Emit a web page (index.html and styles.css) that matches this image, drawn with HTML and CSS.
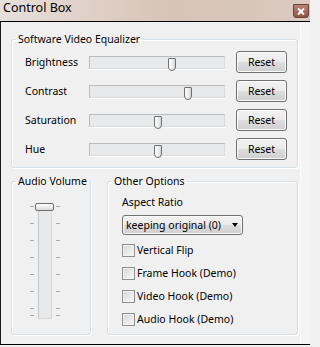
FILE: index.html
```html
<!DOCTYPE html>
<html>
<head>
<meta charset="utf-8">
<link rel="stylesheet" href="styles.css">
</head>
<body>
<div class="titlebar">
  <span class="title">Control Box</span>
  <span class="close"><svg width="8" height="7" viewBox="0 0 8 7"><path d="M1 0.5 L7 6.5 M7 0.5 L1 6.5" stroke="#fff" stroke-width="2"/></svg></span>
</div>
<div class="frame">
  <div class="client">
    <fieldset class="group eq">
      <legend>Software Video Equalizer</legend>
      <div class="eq-body">
        <div class="eq-row"><span class="eq-label">Brightness</span><div class="track"><span class="thumb" style="left:78px"></span></div><button class="btn">Reset</button></div>
        <div class="eq-row"><span class="eq-label">Contrast</span><div class="track"><span class="thumb" style="left:94px"></span></div><button class="btn">Reset</button></div>
        <div class="eq-row"><span class="eq-label">Saturation</span><div class="track"><span class="thumb" style="left:64px"></span></div><button class="btn">Reset</button></div>
        <div class="eq-row"><span class="eq-label">Hue</span><div class="track"><span class="thumb" style="left:64px"></span></div><button class="btn">Reset</button></div>
      </div>
    </fieldset>
    <div class="bottom">
      <fieldset class="group vol">
        <legend>Audio Volume</legend>
        <div class="vol-body">
          <div class="vslider">
            <div class="ticks"><i class="tick"></i><i class="tick"></i><i class="tick"></i><i class="tick"></i><i class="tick"></i><i class="tick"></i><i class="tick"></i><i class="tick end"></i></div>
            <div class="vtrack"><span class="vthumb"></span></div>
            <div class="ticks"><i class="tick"></i><i class="tick"></i><i class="tick"></i><i class="tick"></i><i class="tick"></i><i class="tick"></i><i class="tick"></i><i class="tick end"></i></div>
          </div>
        </div>
      </fieldset>
      <fieldset class="group opts">
        <legend>Other Options</legend>
        <div class="opts-body">
          <div class="opt-label">Aspect Ratio</div>
          <div class="select"><span>keeping original (0)</span><span class="arrow"></span></div>
          <div class="check"><span class="cb"></span><span>Vertical Flip</span></div>
          <div class="check"><span class="cb"></span><span>Frame Hook (Demo)</span></div>
          <div class="check"><span class="cb"></span><span>Video Hook (Demo)</span></div>
          <div class="check"><span class="cb"></span><span>Audio Hook (Demo)</span></div>
        </div>
      </fieldset>
    </div>
  </div>
  <div class="edge"></div>
</div>
</body>
</html>
```
FILE: styles.css
```css
* { box-sizing: border-box; }
body {
  margin: 0;
  width: 310px;
  height: 347px;
  overflow: hidden;
  background: #f0f0f0;
  font-family: "Noto Sans", "Open Sans", sans-serif;
  font-size: 10.5px;
  line-height: 14px;
  color: #000;
}
.titlebar {
  height: 21px;
  display: flex;
  justify-content: space-between;
  align-items: flex-start;
  background: linear-gradient(90deg, #e6dfdb 0%, #dfd0c7 30%, #d8c3b7 55%, #d9c6bb 80%, #dccbc2 100%);
}
.title {
  font-size: 12.5px;
  line-height: 16px;
  margin-left: 3px;
  color: #000;
}
.close {
  width: 16px;
  height: 14px;
  margin: 4px 1px 0 0;
  border: 1px solid #6a4336;
  border-radius: 0 0 3px 3px;
  background: linear-gradient(#b98475 0%, #a56c5c 50%, #8f5546 100%);
  display: flex;
  align-items: center;
  justify-content: center;
}
.frame {
  display: flex;
  height: 324px;
  border-top: 1px solid #000;
  border-bottom: 1px solid #000;
}
.client {
  width: 300px;
  border-left: 1px solid #1a1a1a;
  padding: 10px 0 0 10px;
  background: #f0f0f0;
}
.edge {
  flex: 1;
  background: #f4f4f4;
  border-left: 1px solid #fbfbfb;
}
fieldset.group {
  margin: 0;
  padding: 0;
  min-width: 0;
  border: 1px solid #d5dfe5;
  border-radius: 3px;
  box-shadow: inset 1px 1px 0 #fff, 1px 1px 0 #fff;
}
legend {
  margin-left: 4px;
  padding: 0 2px;
  line-height: 14px;
}
.eq { width: 287px; }
.eq-body {
  padding: 5px 10px 7px 13px;
  display: flex;
  flex-direction: column;
  gap: 7px;
}
.eq-row {
  display: flex;
  align-items: center;
  height: 22px;
}
.eq-label { width: 64px; }
.track {
  position: relative;
  width: 136px;
  height: 13px;
  background: #e7e9ea;
  border: 1px solid;
  border-color: #b9bbbc #d9dbdc #d9dbdc #b9bbbc;
  box-shadow: 0 1px 0 #fff;
}
.thumb {
  position: absolute;
  top: 1px;
  width: 8px;
  height: 13px;
  border: 1px solid #6f6f6f;
  border-radius: 1px 1px 4px 4px;
  background: linear-gradient(90deg, #fdfdfd 0%, #ececec 60%, #d6d6d6 100%);
}
.btn {
  margin: 0 0 0 11px;
  width: 51px;
  height: 22px;
  padding: 0;
  font: inherit;
  color: #000;
  border: 1px solid #707070;
  border-radius: 3px;
  background: linear-gradient(#f2f2f2 0%, #ebebeb 48%, #dddddd 52%, #cfcfcf 100%);
  box-shadow: inset 0 0 0 1px #fbfbfb;
}
.bottom {
  display: flex;
  gap: 16px;
  margin-top: 6px;
}
.vol { width: 80px; }
.opts { width: 191px; }
.vol-body { padding: 16px 0 0 18px; }
.vslider {
  display: flex;
  gap: 4px;
  height: 115px;
}
.ticks {
  width: 4px;
  padding-top: 2px;
  display: flex;
  flex-direction: column;
}
.tick {
  display: block;
  height: 1px;
  background: #a9a9a9;
  margin-top: 16px;
}
.tick:first-child { margin-top: 0; }
.tick.end { margin-top: 6px; }
.vtrack {
  position: relative;
  width: 14px;
  background: #e7e9ea;
  border: 1px solid;
  border-color: #c4c6c7 #d6d8d9 #d6d8d9 #c4c6c7;
}
.vthumb {
  position: absolute;
  left: -4px;
  top: -2px;
  width: 19px;
  height: 8px;
  border: 1px solid #6f6f6f;
  border-radius: 2px;
  background: linear-gradient(#fdfdfd 0%, #ececec 55%, #d8d8d8 100%);
}
.opts-body { padding: 7px 0 7px 14px; }
.opt-label { line-height: 14px; }
.select {
  margin-top: 6px;
  width: 121px;
  height: 20px;
  display: flex;
  align-items: center;
  justify-content: space-between;
  padding: 0 4px 0 3px;
  border: 1px solid #707070;
  border-radius: 3px;
  background: linear-gradient(#f2f2f2 0%, #ebebeb 48%, #dddddd 52%, #cfcfcf 100%);
  box-shadow: inset 0 0 0 1px #fbfbfb;
}
.arrow {
  width: 0;
  height: 0;
  border-top: 4px solid #000;
  border-left: 3.5px solid transparent;
  border-right: 3.5px solid transparent;
}
.check {
  margin-top: 7px;
  height: 16px;
  display: flex;
  align-items: center;
  gap: 2px;
}
.cb {
  width: 13px;
  height: 13px;
  border: 1px solid #8e8f8f;
  background: linear-gradient(135deg, #d4d4d4 0%, #ececec 60%, #fafafa 100%);
  box-shadow: inset 0 0 0 1px #f2f2f2;
}
```
